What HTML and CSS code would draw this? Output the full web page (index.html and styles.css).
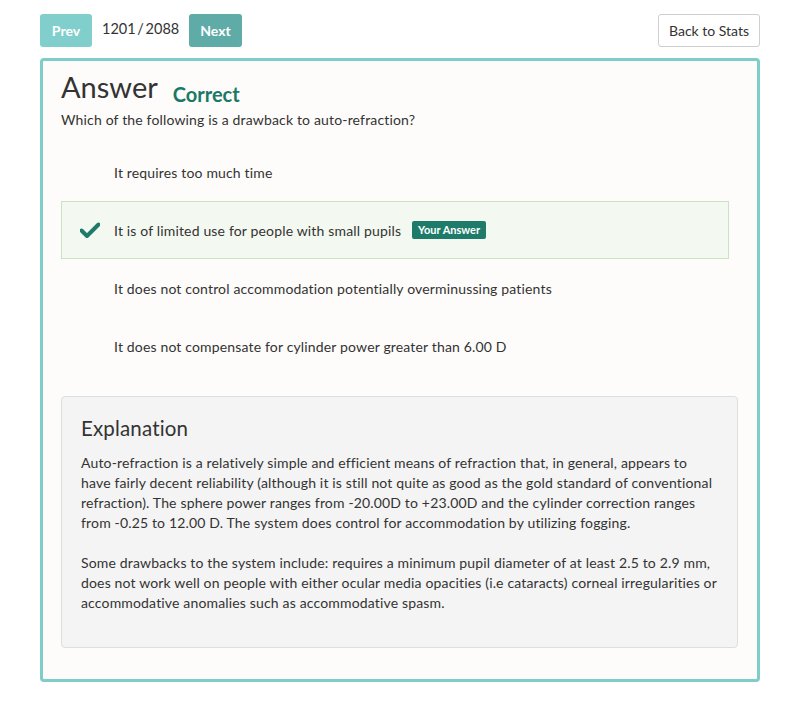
FILE: index.html
```html
<!DOCTYPE html>
<html>
<head>
<meta charset="utf-8">
<link rel="stylesheet" href="styles.css">
</head>
<body>
<div class="page">
  <div class="topbar">
    <div class="nav">
      <button class="btn btn-prev">Prev</button>
      <span class="counter">1201 / 2088</span>
      <button class="btn btn-next">Next</button>
    </div>
    <button class="btn btn-back">Back to Stats</button>
  </div>
  <div class="card">
    <div class="title-row">
      <h1 class="title">Answer</h1>
      <span class="status">Correct</span>
    </div>
    <p class="question">Which of the following is a drawback to auto-refraction?</p>
    <ul class="options">
      <li class="option"><span class="icon"></span><span>It requires too much time</span></li>
      <li class="option selected"><span class="icon"><svg width="20" height="16" viewBox="0 0 20 16"><path d="M1.5 8.5 L7 14 L18.5 2.5" fill="none" stroke="#1e7b6a" stroke-width="4" stroke-linecap="round" stroke-linejoin="round"/></svg></span><span>It is of limited use for people with small pupils</span><span class="badge">Your Answer</span></li>
      <li class="option"><span class="icon"></span><span>It does not control accommodation potentially overminussing patients</span></li>
      <li class="option"><span class="icon"></span><span>It does not compensate for cylinder power greater than 6.00 D</span></li>
    </ul>
    <div class="explanation">
      <h2 class="exp-title">Explanation</h2>
      <p>Auto-refraction is a relatively simple and efficient means of refraction that, in general, appears to have fairly decent reliability (although it is still not quite as good as the gold standard of conventional refraction). The sphere power ranges from -20.00D to +23.00D and the cylinder correction ranges from -0.25 to 12.00 D. The system does control for accommodation by utilizing fogging.</p>
      <p>Some drawbacks to the system include: requires a minimum pupil diameter of at least 2.5 to 2.9 mm, does not work well on people with either ocular media opacities (i.e cataracts) corneal irregularities or accommodative anomalies such as accommodative spasm.</p>
    </div>
  </div>
</div>
</body>
</html>
```

FILE: styles.css
```css
* { box-sizing: border-box; }
body {
  margin: 0;
  background: #ffffff;
  font-family: Lato, "Open Sans", sans-serif;
  color: #333;
  font-size: 14px;
  letter-spacing: 0.16px;
}
.page {
  padding: 14px 40px 20px 40px;
}
.topbar {
  display: flex;
  justify-content: space-between;
  align-items: center;
  height: 33px;
  margin-bottom: 11px;
}
.nav {
  display: flex;
  align-items: center;
}
.btn {
  font-family: inherit;
  font-size: 14px;
  height: 33px;
  border-radius: 3px;
  border: 1px solid transparent;
  padding: 0;
  letter-spacing: 0;
}
.btn-prev {
  background: #80cfcd;
  color: #fff;
  font-weight: 700;
  width: 52px;
}
.btn-next {
  background: #5eaba8;
  color: #fff;
  font-weight: 700;
  width: 53px;
}
.counter {
  font-size: 14.5px;
  color: #333;
  margin: 0 11px 0 10px;
  width: 76px;
  white-space: nowrap;
  letter-spacing: 0;
  word-spacing: -2px;
  position: relative;
  top: -2px;
}
.btn-back {
  background: #fff;
  border: 1px solid #cfcfcf;
  color: #333;
  width: 102px;
}
.card {
  border: 3px solid #7dcdcb;
  border-radius: 4px;
  background: #fdfcfa;
  padding: 8px 19px 31px 18px;
}
.title-row {
  display: flex;
  align-items: baseline;
}
.title {
  margin: 0;
  font-size: 29px;
  font-weight: 400;
  color: #333;
  line-height: 36px;
  letter-spacing: 0;
}
.status {
  margin-left: 15px;
  font-size: 20px;
  font-weight: 700;
  color: #1a7866;
  position: relative;
  top: 4px;
  letter-spacing: 0;
}
.question {
  margin: 5px 0 0 0;
  line-height: 20px;
}
.options {
  list-style: none;
  margin: 13px 9px 0 0;
  padding: 0;
}
.option {
  display: flex;
  align-items: center;
  height: 58px;
  padding-left: 18px;
  border: 1px solid transparent;
}
.option .icon {
  width: 34px;
  display: flex;
  align-items: center;
}
.option.selected {
  background: #f3f9f1;
  border-color: #c9e3c4;
}
.badge {
  margin-left: 11px;
  background: #1e7b6a;
  color: #fff;
  font-size: 11px;
  font-weight: 700;
  padding: 2px 6px;
  border-radius: 2px;
  line-height: 14px;
  letter-spacing: 0;
}
.explanation {
  margin-top: 21px;
  background: #f4f4f4;
  border: 1px solid #dedede;
  border-radius: 4px;
  padding: 17px 19px 34px 19px;
}
.exp-title {
  margin: 0 0 11px 0;
  font-size: 20.5px;
  font-weight: 400;
  line-height: 28px;
  color: #333;
}
.explanation p {
  margin: 0 0 20px 0;
  line-height: 20px;
}
.explanation p:last-child { margin-bottom: 0; }
```
